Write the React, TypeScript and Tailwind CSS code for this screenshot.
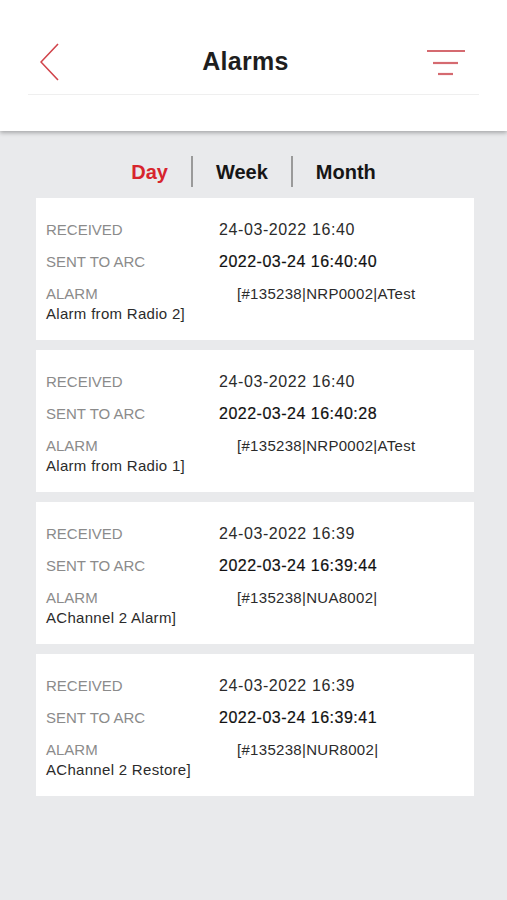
const alarms = [
  { received: "24-03-2022 16:40", sent: "2022-03-24 16:40:40", line1: "[#135238|NRP0002|ATest", line2: "Alarm from Radio 2]" },
  { received: "24-03-2022 16:40", sent: "2022-03-24 16:40:28", line1: "[#135238|NRP0002|ATest", line2: "Alarm from Radio 1]" },
  { received: "24-03-2022 16:39", sent: "2022-03-24 16:39:44", line1: "[#135238|NUA8002|", line2: "AChannel 2 Alarm]" },
  { received: "24-03-2022 16:39", sent: "2022-03-24 16:39:41", line1: "[#135238|NUR8002|", line2: "AChannel 2 Restore]" },
];

type Alarm = (typeof alarms)[number];

function AlarmCard({ received, sent, line1, line2 }: Alarm) {
  return (
    <div className="bg-white pt-[16px] pb-[16px] pl-[10px] pr-4">
      <div className="flex items-center h-8">
        <span className="w-[173px] text-[15px] text-[#8b8b8b]">RECEIVED</span>
        <span className="text-[16px] text-[#2b2b2b] tracking-[0.6px]">{received}</span>
      </div>
      <div className="flex items-center h-8">
        <span className="w-[173px] text-[15px] text-[#8b8b8b]">SENT TO ARC</span>
        <span className="text-[16px] text-[#111] tracking-[0.5px] [-webkit-text-stroke:0.2px_#111]">{sent}</span>
      </div>
      <div className="mt-[6px] leading-[20px] text-[15px] text-[#2b2b2b]">
        <div className="flex">
          <span className="w-[191px] text-[#8b8b8b]">ALARM</span>
          <span className="tracking-[0.3px]">{line1}</span>
        </div>
        <div className="tracking-[0.3px]">{line2}</div>
      </div>
    </div>
  );
}

export default function App() {
  return (
    <div className="w-[507px] h-[900px] bg-[#e9eaec] font-['Liberation_Sans',Arial,sans-serif] overflow-hidden">
      <header className="bg-white h-[131px] pt-[30px] shadow-[0_2px_4px_rgba(0,0,0,0.28)]">
        <div className="flex items-center justify-between h-[65px] mx-[28px] pl-[12px] pr-[13px] border-b border-[#efefef]">
          <svg width="20" height="40" viewBox="0 0 20 40">
            <path d="M18 2 L1 20 L18 38" fill="none" stroke="#d1444b" strokeWidth="1.6" />
          </svg>
          <h1 className="text-[25px] font-bold text-[#1e1e1e] tracking-[0.3px] ml-[5px]">Alarms</h1>
          <svg width="40" height="28" viewBox="0 0 40 28">
            <line x1="1" y1="3" x2="39" y2="3" stroke="#d56a70" strokeWidth="2.2" />
            <line x1="7" y1="15" x2="32" y2="15" stroke="#d56a70" strokeWidth="2.2" />
            <line x1="12" y1="26" x2="27" y2="26" stroke="#d56a70" strokeWidth="2.2" />
          </svg>
        </div>
      </header>

      <nav className="flex justify-center items-center pt-[25px] pb-[11px]">
        <span className="text-[20px] font-bold text-[#d7252d] pr-[23px]">Day</span>
        <span className="w-[2px] h-[31px] bg-[#9a9a9a]" />
        <span className="text-[20px] font-bold text-[#161616] px-[23px]">Week</span>
        <span className="w-[2px] h-[31px] bg-[#9a9a9a]" />
        <span className="text-[20px] font-bold text-[#161616] pl-[23px]">Month</span>
      </nav>

      <div className="flex flex-col gap-[10px] ml-[36px] mr-[33px]">
        {alarms.map((a, i) => (
          <AlarmCard key={i} {...a} />
        ))}
      </div>
    </div>
  );
}
